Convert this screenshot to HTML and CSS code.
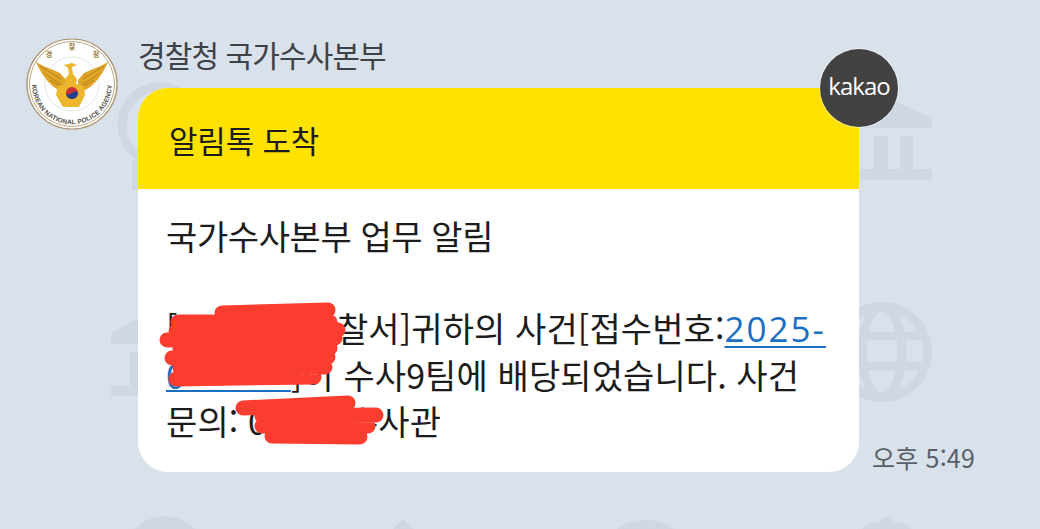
FILE: index.html
```html
<!DOCTYPE html>
<html lang="ko">
<head>
    <meta charset="UTF-8">
    <meta name="viewport" content="width=device-width, initial-scale=1.0">
    <title>경찰청 국가수사본부</title>
    <link rel="stylesheet" href="styles.css">
</head>
<body>
    <!-- 배경 무늬 -->
    <svg class="wallpaper" viewBox="0 0 1040 529" aria-hidden="true">
        <g fill="#cfd8e2">
            <path d="M860 85l72 33v10h-72z"/>
            <rect x="860" y="169" width="72" height="11"/>
            <rect x="874" y="136" width="14" height="33"/>
            <rect x="900" y="136" width="13" height="33"/>
            <path d="M138 318l-27 15v11h27z"/>
            <rect x="111" y="386" width="28" height="10"/>
            <rect x="130" y="352" width="9" height="34"/>
            <path d="M165 516c-12 0-22 5-30 13h60c-8-8-18-13-30-13z"/>
            <path d="M403 519l-10 10h20z"/>
            <path d="M645 520c-12 0-22 3-28 9h56c-6-6-16-9-28-9z"/>
            <path d="M886 516l-9 7-5-1-10 7h50l-10-7-5 1z"/>
            <rect x="132" y="160" width="8" height="30"/>
        </g>
        <g class="wall-line">
            <circle cx="160" cy="125" r="38"/>
            <circle cx="882" cy="352" r="45.5"/>
            <ellipse cx="882" cy="352" rx="20" ry="45"/>
            <path d="M843 336h78M843 366h78"/>
        </g>
    </svg>

    <div class="chat">
        <svg class="seal" viewBox="0 0 92 92">
            <defs>
                <path id="sealArc" d="M6.500 40a40 40 0 1 0 79 0"/>
            </defs>
            <circle cx="46" cy="46" r="45" fill="#fff" stroke="#a8926a" stroke-width="1.200"/>
            <circle cx="46" cy="46" r="42.500" fill="none" stroke="#b9a57e" stroke-width="1"/>
            <circle cx="46" cy="46" r="27" fill="none" stroke="#cfd3d8" stroke-width=".6"/>
            <text class="seal-top" x="46" y="11" text-anchor="middle">찰</text>
            <text class="seal-top" x="23" y="19" text-anchor="middle">경</text>
            <text class="seal-top" x="70" y="19" text-anchor="middle">청</text>
            <text class="seal-arc"><textPath href="#sealArc" startOffset="50%" text-anchor="middle">KOREAN NATIONAL POLICE AGENCY</textPath></text>
            <!-- 독수리 -->
            <path d="M10 24c8 5 16 7 24 11l6 7-1 12c-12-2-22-14-29-30z" fill="#e0a526"/>
            <path d="M82 24c-8 5-16 7-24 11l-6 7 1 12c12-2 22-14 29-30z" fill="#e0a526"/>
            <path d="M14 28l21 13M18 35l18 12M24 42l13 8M78 28L57 41M74 35L56 47M68 42l-13 8" stroke="#a87a18" stroke-width=".8" fill="none"/>
            <path d="M38 27l8-2 5 2-5 2 1 7 4 5-1 5 8 2 1 9-6 12H37l-7-12 2-9 8-2-1-5 4-5-1-6z" fill="#eeb62c"/>
            <circle cx="46" cy="55" r="6" fill="#c9303c"/>
            <path d="M40 55a6 6 0 0 0 12 0c-1.500-2-4-2-6 0s-4.500 2-6 0z" fill="#1f3f8f"/>
        </svg>

        <div class="message">
            <div class="sender">경찰청 국가수사본부</div>
            <div class="message-row">
                <div class="bubble">
                    <div class="badge">kakao</div>
                    <div class="bubble-head">알림톡 도착</div>
                    <div class="bubble-body">
                        <p>국가수사본부 업무 알림</p>
                        <p class="notice">[<span class="hidden-a"></span>경찰서]귀하의 사건[접수번호:<a href="#" class="case-year">2025-</a><br><a href="#" class="case-no">0&nbsp;&nbsp;&nbsp;&nbsp;&nbsp;&nbsp;&nbsp;&nbsp;&nbsp;&nbsp;&nbsp;</a>]이 수사9팀에 배당되었습니다. 사건<br>문의: 0<span class="hidden-c"></span>수사관</p>
                    </div>
                    <!-- 가림 표시 -->
                    <svg class="scribble" viewBox="138 88 721 384" aria-hidden="true">
                        <path d="M222 313l106-3M178 322l152 0M176 331l162-1M167 340l168-2M180 349l150-1M172 358l156-1M180 368l145-1M176 379l138-2"/>
                        <path d="M243 408l105-5M262 416l114-1M262 426l106 0M272 436l88 1"/>
                    </svg>
                </div>
                <div class="time">오후 5:49</div>
            </div>
        </div>
    </div>
</body>
</html>
```
FILE: styles.css
```css
html, body {
    margin: 0;
    padding: 0;
}

body {
    position: relative;
    width: 1040px;
    height: 529px;
    overflow: hidden;
    background: #d9e1ea;
    font-family: 'Noto Sans CJK KR', 'Noto Sans', sans-serif;
    color: #1c1c1c;
}

.wallpaper {
    position: absolute;
    left: 0;
    top: 0;
    width: 1040px;
    height: 529px;
}

.wall-line {
    fill: none;
    stroke: #cfd8e2;
    stroke-width: 9;
}

.chat {
    position: relative;
    display: flex;
    gap: 20px;
    padding: 38px 0 0 26px;
}

.seal {
    flex: none;
    width: 92px;
    height: 92px;
}

.seal-top {
    font-size: 7px;
    font-weight: 700;
    fill: #9a7d3c;
}

.seal-arc {
    font-family: 'Liberation Sans', sans-serif;
    font-size: 6.6px;
    font-weight: 700;
    letter-spacing: .15px;
    fill: #54504a;
}

.sender {
    height: 50px;
    font-size: 30px;
    line-height: 33px;
    letter-spacing: -.9px;
    color: #3d4248;
}

.message-row {
    display: flex;
    align-items: flex-end;
    gap: 13px;
}

.bubble {
    position: relative;
    width: 721px;
    height: 384px;
    background: #fff;
    border-radius: 30px;
}

.badge {
    position: absolute;
    top: -39px;
    right: -39px;
    width: 78px;
    height: 78px;
    border-radius: 50%;
    background: #424242;
    box-shadow: 0 0 0 1px rgba(255, 255, 255, .45);
    color: #fff;
    font-family: 'Open Sans', sans-serif;
    font-size: 24px;
    line-height: 74px;
    text-align: center;
    letter-spacing: -1px;
}

.bubble-head {
    height: 101px;
    padding-left: 31px;
    background: #ffe200;
    border-radius: 30px 30px 0 0;
    font-size: 31px;
    line-height: 104px;
    letter-spacing: -.2px;
}

.bubble-body {
    padding: 24px 28px 0;
    font-size: 34px;
    line-height: 46px;
    letter-spacing: -.4px;
    white-space: nowrap;
}

.bubble-body p {
    margin: 0;
}

.bubble-body .notice {
    margin-top: 46px;
    letter-spacing: .1px;
}

.bubble-body a {
    color: #1a6fc4;
    text-decoration: underline;
    text-decoration-thickness: 2px;
    text-underline-offset: 4px;
}

.bubble-body .case-no {
    text-underline-offset: 1px;
}

.case-year {
    font-family: 'Open Sans', sans-serif;
    font-size: 35px;
    letter-spacing: 2px;
}

.hidden-a, .hidden-c {
    display: inline-block;
}

.hidden-a { width: 128px; }
.hidden-c { width: 80px; }

.scribble {
    position: absolute;
    left: 0;
    top: 0;
    width: 721px;
    height: 384px;
    fill: none;
    stroke: #fb3d30;
    stroke-width: 15;
    stroke-linecap: round;
}

.time {
    font-size: 25px;
    line-height: 30px;
    letter-spacing: .2px;
    color: #596069;
}
```
